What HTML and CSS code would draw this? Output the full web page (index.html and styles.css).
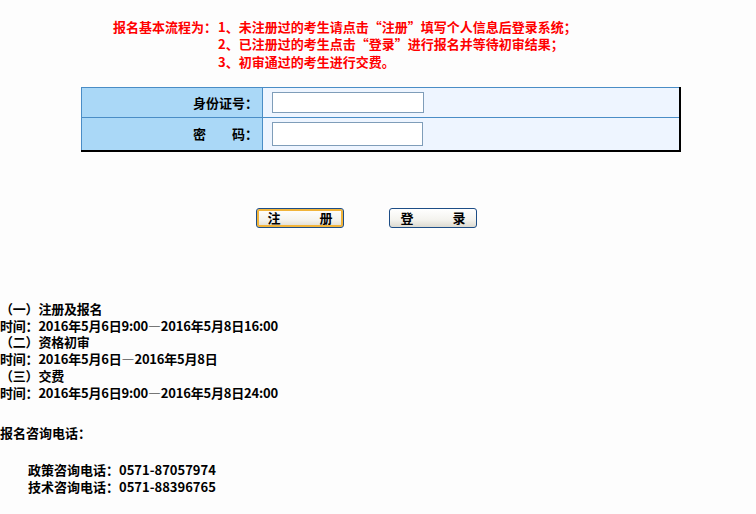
FILE: index.html
```html
<!DOCTYPE html>
<html lang="zh-CN">
<head>
<meta charset="utf-8">
<title>报名</title>
<link rel="stylesheet" href="styles.css">
</head>
<body>
<div class="flow">
  <div class="flow-label">报名基本流程为：</div>
  <div class="flow-steps">
    <div>1、未注册过的考生请点击“注册”填写个人信息后登录系统；</div>
    <div>2、已注册过的考生点击“登录”进行报名并等待初审结果；</div>
    <div>3、初审通过的考生进行交费。</div>
  </div>
</div>

<table class="login">
  <tr class="row1">
    <td class="label">身份证号：</td>
    <td class="field"><input class="inp inp1" type="text"></td>
  </tr>
  <tr class="row2">
    <td class="label">密&#12288;&#12288;码：</td>
    <td class="field"><input class="inp inp2" type="password"></td>
  </tr>
</table>

<div class="buttons">
  <button class="btn btn-focus" type="button">注&#12288;&#12288;&#12288;册</button>
  <button class="btn" type="button">登&#12288;&#12288;&#12288;录</button>
</div>

<div class="info">
  <div>（一）注册及报名</div>
  <div>时间：2016年5月6日9:00—2016年5月8日16:00</div>
  <div>（二）资格初审</div>
  <div>时间：2016年5月6日—2016年5月8日</div>
  <div>（三）交费</div>
  <div>时间：2016年5月6日9:00—2016年5月8日24:00</div>
</div>

<div class="contact">
  <div class="contact-title">报名咨询电话：</div>
  <div class="contact-list">
    <div>政策咨询电话：0571-87057974</div>
    <div>技术咨询电话：0571-88396765</div>
  </div>
</div>
</body>
</html>
```

FILE: styles.css
```css
html, body {
  margin: 0;
  padding: 0;
  background: #fdfdfd;
}
body {
  font-family: "Noto Sans CJK SC", "DejaVu Sans", sans-serif;
  font-size: 13px;
  font-weight: bold;
  color: #000;
  width: 756px;
  height: 514px;
  overflow: hidden;
}

.flow {
  display: flex;
  color: #ff0000;
  padding-top: 18px;
  padding-left: 113px;
  line-height: 17.3px;
}
.flow-label {
  width: 105px;
  flex: none;
}

.login {
  margin-top: 17px;
  margin-left: 81px;
  width: 600px;
  border-collapse: collapse;
  border: 2px solid #000;
  border-top-width: 1px;
  border-left-width: 1px;
}
.login td {
  border: 1px solid #4a8dc6;
  padding: 0;
}
.row1 td { height: 29px; }
.row2 td { height: 32px; }
.label {
  width: 176px;
  background: #aad8f7;
  text-align: right;
  padding-right: 4px !important;
}
.field {
  background: #eef5ff;
  padding-left: 9px !important;
}
.inp {
  display: block;
  box-sizing: border-box;
  border: 1px solid #7f9db9;
  background: #fff;
  margin: 0;
  padding: 0 2px;
}
.inp1 { width: 152px; height: 21px; }
.inp2 { width: 151px; height: 24px; }

.buttons {
  display: flex;
  margin-top: 56px;
  padding-left: 256px;
  gap: 45px;
}
.btn {
  box-sizing: border-box;
  width: 88px;
  height: 20px;
  margin: 0;
  padding: 0;
  font-family: "Noto Sans CJK SC", sans-serif;
  font-size: 13px;
  font-weight: bold;
  line-height: 16px;
  color: #000;
  border: 1px solid #1d4d86;
  border-radius: 3px;
  background: linear-gradient(#ffffff, #f4f3ee 60%, #dcdad0);
}
.btn-focus {
  box-shadow: inset 0 0 0 2px #f1b43a;
}

.info {
  margin-top: 73px;
  line-height: 16.8px;
  letter-spacing: -0.2px;
}

.contact {
  margin-top: 22px;
  line-height: 17px;
}
.contact-list {
  margin-top: 20px;
  padding-left: 28px;
}
```
